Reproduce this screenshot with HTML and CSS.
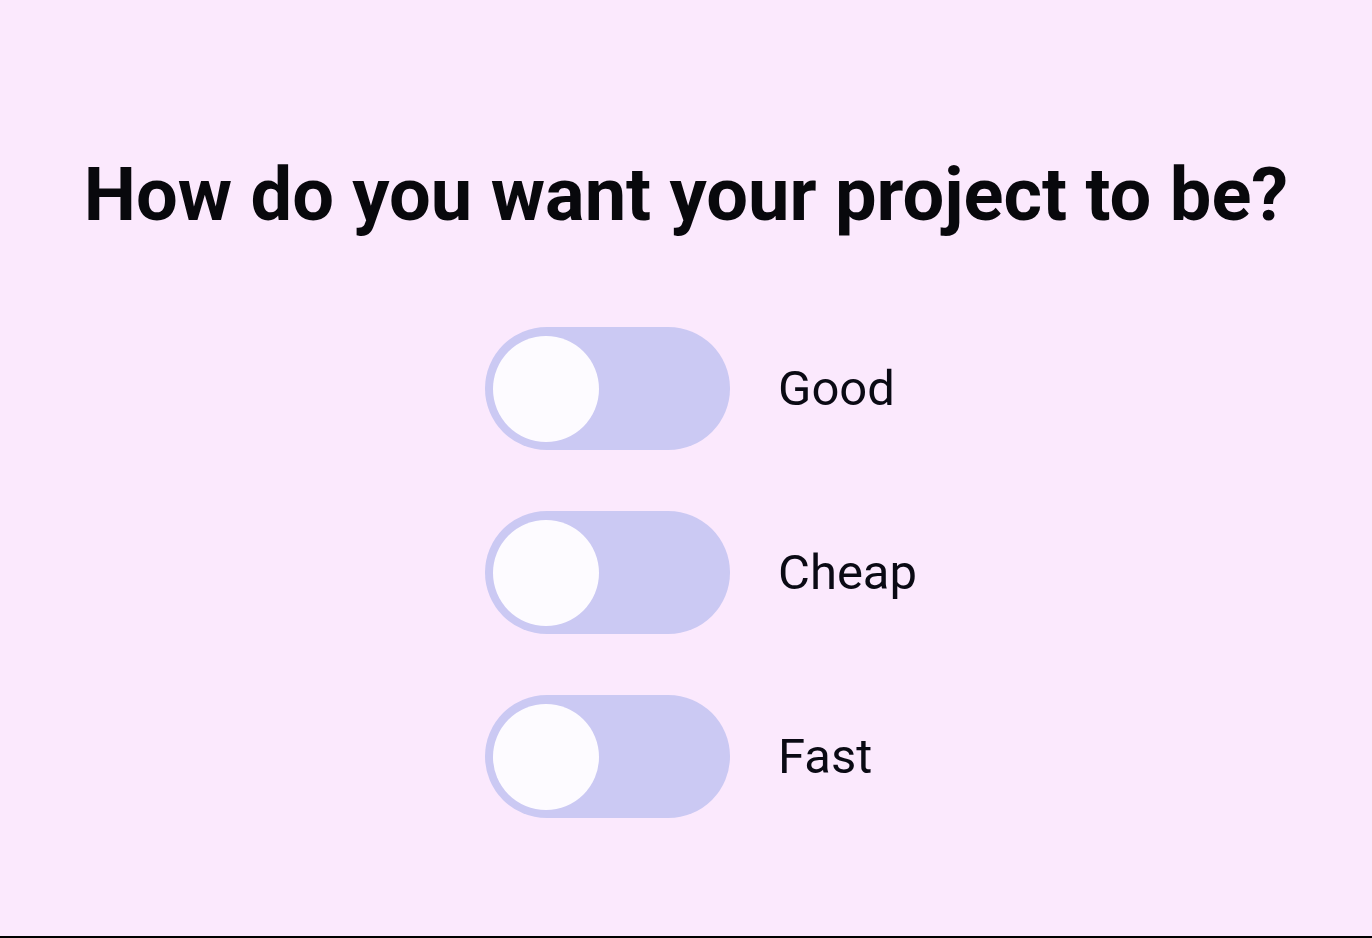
FILE: index.html
```html
<!DOCTYPE html>
<html>
<head>
<meta charset="utf-8">
<link rel="stylesheet" href="styles.css">
</head>
<body>
<main class="page">
  <h1 class="title">How do you want your project to be?</h1>
  <ul class="options">
    <li class="option"><span class="toggle"><span class="thumb"></span></span><span class="label">Good</span></li>
    <li class="option"><span class="toggle"><span class="thumb"></span></span><span class="label">Cheap</span></li>
    <li class="option"><span class="toggle"><span class="thumb"></span></span><span class="label">Fast</span></li>
  </ul>
</main>
</body>
</html>
```
FILE: styles.css
```css
html, body {
  margin: 0;
  padding: 0;
  height: 100%;
}
body {
  background: #fbe9fd;
  font-family: Roboto, "Liberation Sans", sans-serif;
  color: #0a0a14;
  box-sizing: border-box;
  border-bottom: 2px solid #000;
}
.page {
  display: flex;
  flex-direction: column;
  align-items: center;
  padding-top: 150px;
}
.title {
  margin: 0;
  font-size: 74px;
  font-weight: 700;
  line-height: 90px;
  color: #08080c;
  white-space: nowrap;
}
.options {
  list-style: none;
  margin: 87px 0 0;
  padding: 0;
  width: 402px;
  display: flex;
  flex-direction: column;
  gap: 61px;
}
.option {
  display: flex;
  align-items: center;
  gap: 48px;
}
.toggle {
  flex-shrink: 0;
  display: flex;
  align-items: center;
  box-sizing: border-box;
  width: 245px;
  height: 123px;
  padding: 0 8px;
  border-radius: 62px;
  background: #cbc9f3;
}
.thumb {
  width: 106px;
  height: 106px;
  border-radius: 50%;
  background: #fdfbff;
}
.label {
  font-size: 49px;
  font-weight: 400;
  white-space: nowrap;
}
```
